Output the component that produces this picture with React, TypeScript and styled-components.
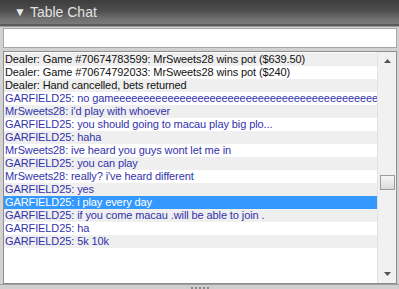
import styled, { createGlobalStyle } from "styled-components";

const GlobalStyle = createGlobalStyle`
  html, body { margin: 0; padding: 0; background: #c9c9c9; }
`;

const Window = styled.div`
  width: 399px;
  height: 289px;
  display: flex;
  flex-direction: column;
  background: #c9c9c9;
  font-family: "Liberation Sans", Arial, sans-serif;
  overflow: hidden;
`;

const Header = styled.div`
  height: 24px;
  flex-shrink: 0;
  display: flex;
  align-items: center;
  gap: 4px;
  padding-left: 14px;
  background: linear-gradient(#3d3d3d 0%, #4e4e4e 45%, #707070 80%, #7a7a7a 100%);
  border-bottom: 2px solid #5c5c5c;
  color: #e2e2e2;
  font-size: 14px;
`;

const Arrow = styled.span`
  font-size: 12px;
  color: #e8e8e8;
`;

const Body = styled.div`
  flex: 1;
  display: flex;
  flex-direction: column;
  gap: 3px;
  padding: 1px 2px 0 3px;
  background: #d2d2d2;
  border-top: 1px solid #9a9a9a;
`;

const Input = styled.div`
  height: 18px;
  flex-shrink: 0;
  background: #fff;
  border: 1px solid #a6a6a6;
`;

const Frame = styled.div`
  height: 231px;
  flex-shrink: 0;
  display: flex;
  background: #fff;
  border: 1px solid #8e8e8e;
`;

const Rows = styled.div`
  flex: 1;
  min-width: 0;
  padding-top: 1px;
`;

const Row = styled.div<{ $odd: boolean; $selected?: boolean; $dealer?: boolean }>`
  height: 13px;
  line-height: 13px;
  padding-left: 1px;
  font-size: 11px;
  letter-spacing: -0.1px;
  white-space: nowrap;
  overflow: hidden;
  background: ${(p) => (p.$selected ? "#3399ff" : p.$odd ? "#efefef" : "#fff")};
  color: ${(p) => (p.$selected ? "#fff" : p.$dealer ? "#111" : "#3232ac")};
`;

const Scrollbar = styled.div`
  width: 18px;
  flex-shrink: 0;
  display: flex;
  flex-direction: column;
  align-items: center;
  background: #f1f1f1;
  border-left: 1px solid #e2e2e2;
`;

const ArrowBtn = styled.div`
  height: 18px;
  display: flex;
  align-items: center;
  justify-content: center;
`;

const Track = styled.div`
  flex: 1;
  width: 100%;
  display: flex;
  justify-content: center;
  padding-top: 105px;
`;

const Thumb = styled.div`
  width: 15px;
  height: 15px;
  box-sizing: border-box;
  border: 1px solid #9c9c9c;
  background: linear-gradient(#f6f6f6, #dadada);
`;

const Footer = styled.div`
  flex: 1;
  display: flex;
  justify-content: center;
  align-items: flex-end;
  gap: 2px;
  background: #cfcfcf;
  border-top: 1px solid #9e9e9e;
`;

const Dot = styled.span`
  width: 2px;
  height: 2px;
  background: #8a8a8a;
`;

const lines: { text: string; dealer?: boolean }[] = [
  { text: "Dealer: Game #70674783599: MrSweets28 wins pot ($639.50)", dealer: true },
  { text: "Dealer: Game #70674792033: MrSweets28 wins pot ($240)", dealer: true },
  { text: "Dealer: Hand cancelled, bets returned", dealer: true },
  { text: "GARFIELD25: no gam" + "e".repeat(44) },
  { text: "MrSweets28: i'd play with whoever" },
  { text: "GARFIELD25: you should going to macau play big plo..." },
  { text: "GARFIELD25: haha" },
  { text: "MrSweets28: ive heard you guys wont let me in" },
  { text: "GARFIELD25: you can play" },
  { text: "MrSweets28: really?  i've heard different" },
  { text: "GARFIELD25: yes" },
  { text: "GARFIELD25: i play every day" },
  { text: "GARFIELD25: if you come macau .will be able to join ." },
  { text: "GARFIELD25: ha" },
  { text: "GARFIELD25: 5k 10k" },
];

export default function App() {
  return (
    <Window>
      <GlobalStyle />
      <Header>
        <Arrow>▼</Arrow>
        <span>Table Chat</span>
      </Header>
      <Body>
        <Input />
        <Frame>
          <Rows>
            {lines.map((l, i) => (
              <Row key={i} $odd={i % 2 === 0} $selected={i === 11} $dealer={l.dealer}>
                {l.text}
              </Row>
            ))}
          </Rows>
          <Scrollbar>
            <ArrowBtn>
              <svg width="7" height="4" viewBox="0 0 7 4">
                <path d="M0 4 L3.5 0 L7 4 Z" fill="#555" />
              </svg>
            </ArrowBtn>
            <Track>
              <Thumb />
            </Track>
            <ArrowBtn>
              <svg width="7" height="4" viewBox="0 0 7 4">
                <path d="M0 0 L3.5 4 L7 0 Z" fill="#555" />
              </svg>
            </ArrowBtn>
          </Scrollbar>
        </Frame>
      </Body>
      <Footer>
        <Dot />
        <Dot />
        <Dot />
        <Dot />
        <Dot />
      </Footer>
    </Window>
  );
}
